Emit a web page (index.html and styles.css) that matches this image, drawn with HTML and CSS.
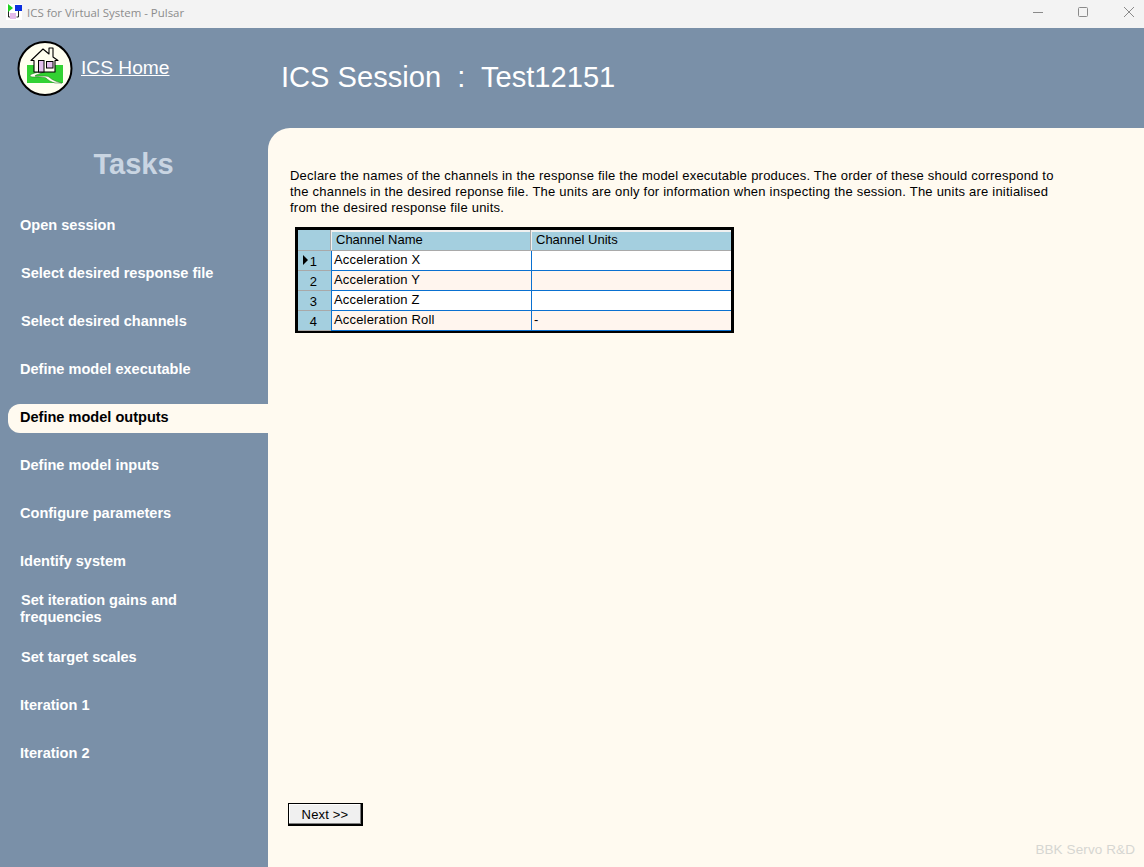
FILE: index.html
```html
<!DOCTYPE html>
<html lang="en">
<head>
<meta charset="utf-8">
<title>ICS for Virtual System - Pulsar</title>
<link rel="stylesheet" href="styles.css">
</head>
<body>
<div class="window">
  <header class="titlebar">
    <svg class="app-icon" width="16" height="16" viewBox="0 0 16 16">
      <rect width="16" height="16" fill="#fff"/>
      <path d="M2.500 4v9h2M12.500 7v6h-2" fill="none" stroke="#222" stroke-width="1"/>
      <rect x="4" y="9" width="6" height="6" fill="#e3b9ea"/>
      <rect x="9" y="1" width="7" height="6" fill="#0a2ee0"/>
      <path d="M2 0l5 4-5 4z" fill="#1fd01f"/>
    </svg>
    <span class="window-title">ICS for Virtual System - Pulsar</span>
    <div class="window-controls">
      <svg width="46" height="28" viewBox="0 0 46 28"><path d="M27 12.500h10" stroke="#8a8a8a" stroke-width="1"/></svg>
      <svg width="46" height="28" viewBox="0 0 46 28"><rect x="26.500" y="7.500" width="9" height="9" rx="1" fill="none" stroke="#8a8a8a"/></svg>
      <svg width="46" height="28" viewBox="0 0 46 28"><path d="M26 7l10 10M36 7l-10 10" stroke="#8a8a8a" stroke-width="1"/></svg>
    </div>
  </header>
  <div class="app">
    <aside class="sidebar">
      <div class="home">
        <svg class="home-logo" width="56" height="56" viewBox="0 0 56 56">
          <circle cx="28" cy="28.500" r="26.500" fill="#fffff0" stroke="#000" stroke-width="2"/>
          <rect x="10" y="25" width="36" height="18" fill="#32d232"/>
          <path d="M22 32c-4 1-9 2-9 4 0 2 13 0 16 2 2 2 5 4 9 5h7c-5-1-10-3-13-6-2-2-14 0-14-1 0-1 5-2 8-4z" fill="#fffff0" stroke="#1a6a1a" stroke-width=".5"/>
          <path d="M17 32V20.500h-3L26 9l6 5V8h4v9l5 3.500h-3V32z" fill="#fffff0" stroke="#000" stroke-width="1.100" stroke-linejoin="round"/>
          <rect x="21.500" y="20.500" width="5.500" height="11.500" fill="#e3c0ee" stroke="#000"/>
          <rect x="29.500" y="21.500" width="6.500" height="6.500" fill="#e3c0ee" stroke="#000"/>
        </svg>
        <a class="home-link" href="#">ICS Home</a>
      </div>
      <h2 class="tasks-title">Tasks</h2>
      <nav class="task-list">
        <a class="task" href="#">Open session</a>
        <a class="task task-shift" href="#">Select desired response file</a>
        <a class="task task-shift" href="#">Select desired channels</a>
        <a class="task" href="#">Define model executable</a>
        <a class="task task-active" href="#">Define model outputs</a>
        <a class="task" href="#">Define model inputs</a>
        <a class="task" href="#">Configure parameters</a>
        <a class="task" href="#">Identify system</a>
        <a class="task task-shift" href="#"><span>Set iteration gains and<br><span class="unshift">frequencies</span></span></a>
        <a class="task task-shift" href="#">Set target scales</a>
        <a class="task" href="#">Iteration 1</a>
        <a class="task" href="#">Iteration 2</a>
      </nav>
    </aside>
    <main class="main">
      <h1 class="session-title">ICS Session&nbsp; :&nbsp; Test12151</h1>
      <section class="panel">
        <p class="intro">Declare the names of the channels in the response file the model executable produces. The order of these should correspond to the channels in the desired reponse file. The units are only for information when inspecting the session. The units are initialised from the desired response file units.</p>
        <table class="grid">
          <thead>
            <tr><th class="corner"></th><th class="col-name"><span>Channel Name</span></th><th class="col-units"><span>Channel Units</span></th></tr>
          </thead>
          <tbody>
            <tr><th class="row-head"><i class="row-marker"></i>1</th><td>Acceleration X</td><td></td></tr>
            <tr class="alt"><th class="row-head">2</th><td>Acceleration Y</td><td></td></tr>
            <tr><th class="row-head">3</th><td>Acceleration Z</td><td></td></tr>
            <tr class="alt"><th class="row-head">4</th><td>Acceleration Roll</td><td>-</td></tr>
          </tbody>
        </table>
        <div class="panel-foot">
          <button class="next" type="button">Next &gt;&gt;</button>
          <div class="brand">BBK Servo R&amp;D</div>
        </div>
      </section>
    </main>
  </div>
</div>
</body>
</html>
```
FILE: styles.css
```css
* { box-sizing: border-box; }
html, body { margin: 0; height: 100%; }
body { font-family: "Liberation Sans", Arial, sans-serif; overflow: hidden; }
.window { display: flex; flex-direction: column; height: 867px; width: 1144px; }

.titlebar { display: flex; align-items: center; height: 28px; background: #f3f3f3; padding-left: 6px; flex: none; }
.app-icon { flex: none; margin-top: -4px; }
.window-title { margin-left: 5px; margin-top: -3px; font: 11.450px "Open Sans", "Noto Sans", sans-serif; color: #8c8c8c; }
.window-controls { margin-left: auto; display: flex; align-items: center; }
.window-controls svg { display: block; }

.app { flex: 1; display: flex; background: #7a90a8; min-height: 0; }
.sidebar { width: 268px; flex: none; display: flex; flex-direction: column; }
.home { display: flex; align-items: center; padding: 0 0 0 17px; height: 80px; }
.home-logo { flex: none; display: block; }
.home-link { margin-left: 8px; color: #fff; font-size: 19.200px; }
.tasks-title { margin: 36px 0 0; text-align: center; width: 267px; font-size: 29px; line-height: 40px; font-weight: bold; color: #c9d5e2; }
.task-list { display: flex; flex-direction: column; margin-top: 17px; padding-left: 8px; }
.task { height: 48px; display: flex; align-items: center; padding-left: 12px; color: #fff; font-size: 14.550px; line-height: 17px; font-weight: bold; text-decoration: none; }
.task-shift { padding-left: 13px; }
.unshift { margin-left: -1px; }
.task-active { height: 29px; margin: 11px 0 8px; padding-bottom: 3px; background: #fffaf0; color: #000; border-radius: 12px 0 0 12px; }

.main { flex: 1; display: flex; flex-direction: column; min-width: 0; }
.session-title { margin: 0; height: 100px; padding: 29px 0 0 13px; font-size: 29.100px; line-height: 40px; font-weight: normal; color: #fff; white-space: nowrap; }
.panel { flex: 1; display: flex; flex-direction: column; background: #fffaf0; border-radius: 22px 0 0 0; padding: 40px 0 0 20px; min-height: 0; }
.intro { margin: 0 0 0 2px; width: 772px; font-size: 13px; line-height: 16px; color: #000; letter-spacing: .22px; }
.grid { margin: 11px 0 0 7px; width: 439px; table-layout: fixed; border-collapse: separate; border-spacing: 0; border: 3px solid #000; border-bottom-width: 2px; font-size: 13px; background: #fff; color: #000; }
.grid th, .grid td { padding: 0; height: 20px; font-weight: normal; text-align: left; white-space: nowrap; letter-spacing: .18px; }
.corner { width: 33px; background: #a4cfdf; border-right: 1px solid #a9a9a9; border-bottom: 1px solid #a9a9a9; }
.col-name, .col-units { background: #a4cfdf; border-bottom: 1px solid #a9a9a9; border-right: 1px solid #a9a9a9; }
.col-units { border-right: 0; }
.col-name { width: 200px; }
.grid thead span { display: block; height: 20px; line-height: 16px; padding-left: 4px; letter-spacing: 0; border: 1px solid #f0f0f0; border-width: 2px 0 0 1px; }
.row-head { background: #a4cfdf; text-align: center !important; position: relative; border-bottom: 1px solid #a9a9a9; padding: 2px 2px 0 0 !important; }
.row-marker { position: absolute; left: 5px; top: 4px; border-left: 5px solid #000; border-top: 5px solid transparent; border-bottom: 5px solid transparent; }
.grid td { border-bottom: 1px solid #0a70d0; border-left: 1px solid #0a70d0; padding: 0 0 1px 2px; line-height: 16px; }
.alt td { background: #fff5ee; }
.panel-foot { margin-top: auto; display: flex; flex-direction: column; }
.next { width: 75px; height: 23px; padding: 0; font: 13px "Liberation Sans", Arial, sans-serif; letter-spacing: .18px; color: #000; background: #f0f0f0; border: 1px solid #000; border-right: 2px solid #000; border-bottom: 2px solid #000; box-shadow: inset -1px -1px 0 #808080, inset 1px 1px 0 #fff; }
.brand { align-self: flex-end; margin: 16px 9px 9px 0; font-size: 13.500px; line-height: 16px; color: #d6d6d2; letter-spacing: .1px; }
```
